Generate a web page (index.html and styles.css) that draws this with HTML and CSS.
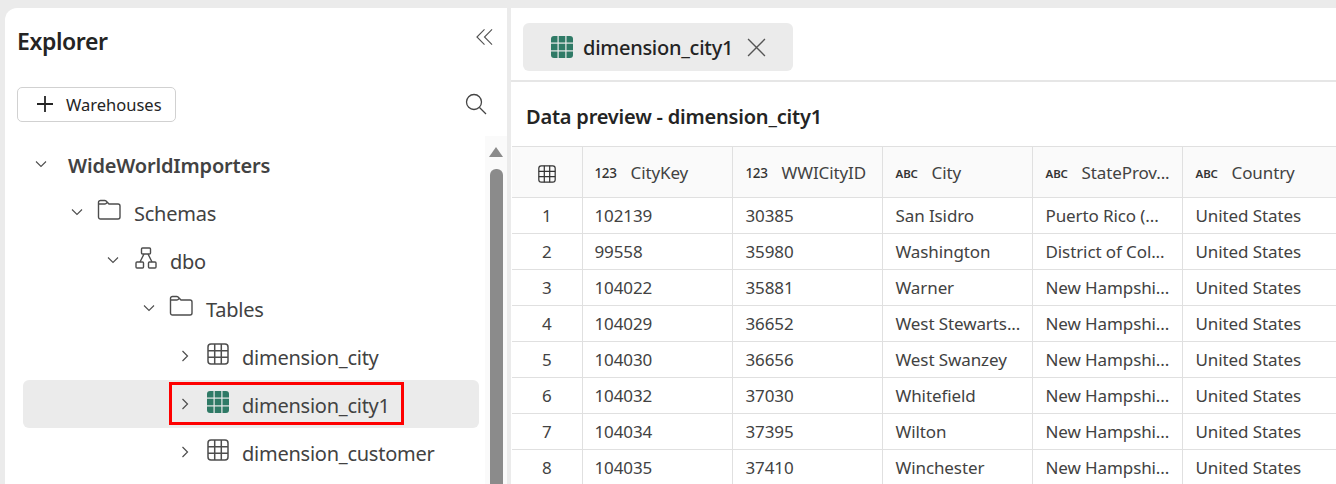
FILE: index.html
```html
<!DOCTYPE html>
<html lang="en">
<head>
    <meta charset="UTF-8">
    <title>Explorer - dimension_city1</title>
    <link rel="stylesheet" href="styles.css">
</head>
<body>
    <svg class="icon-defs" width="0" height="0">
        <symbol id="chevron-down" viewBox="0 0 12 12"><path d="M1 3.500 6 8.500 11 3.500" fill="none" stroke="currentColor" stroke-width="1.100"/></symbol>
        <symbol id="chevron-right" viewBox="0 0 12 12"><path d="M3.500 1 8.500 6 3.500 11" fill="none" stroke="currentColor" stroke-width="1.200"/></symbol>
        <symbol id="folder" viewBox="0 0 24 22"><path d="M1.500 5V3.500a2 2 0 0 1 2-2h4.200c.6 0 1 .2 1.400.6L12 5h9a2 2 0 0 1 2 2v11a2 2 0 0 1-2 2H3.500a2 2 0 0 1-2-2V5h6.200c.6 0 1-.2 1.400-.6l1.200-1.200" fill="none" stroke="currentColor" stroke-width="1.400"/></symbol>
        <symbol id="schema" viewBox="0 0 22 22"><g fill="none" stroke="currentColor" stroke-width="1.400"><rect x="6.500" y="1" width="9" height="6" rx="1"/><rect x="1" y="15" width="7.500" height="6" rx="1"/><rect x="13.500" y="15" width="7.500" height="6" rx="1"/><path d="M9 7 5 15M13 7l4 8"/></g></symbol>
        <symbol id="table" viewBox="0 0 22 22"><g fill="none" stroke="currentColor" stroke-width="1.500"><rect x="1" y="1" width="20" height="20" rx="3"/><path d="M1 7.700h20M1 14.300h20M7.700 1v20M14.300 1v20"/></g></symbol>
        <symbol id="table-filled" viewBox="0 0 22 22"><g fill="#2f7a66"><path d="M0 3a3 3 0 0 1 3-3h3.500v6.500H0z"/><rect x="7.700" width="6.600" height="6.500"/><path d="M15.500 0H19a3 3 0 0 1 3 3v3.500h-6.500z"/><rect y="7.700" width="6.500" height="6.600"/><rect x="7.700" y="7.700" width="6.600" height="6.600"/><rect x="15.500" y="7.700" width="6.500" height="6.600"/><path d="M0 15.500h6.500V22H3a3 3 0 0 1-3-3z"/><rect x="7.700" y="15.500" width="6.600" height="6.500"/><path d="M15.500 15.500H22V19a3 3 0 0 1-3 3h-3.500z"/></g></symbol>
    </svg>

    <div class="app">
        <aside class="sidebar">
            <div class="sidebar-head">
                <h1 class="sidebar-title">Explorer</h1>
                <svg class="collapse-icon" viewBox="0 0 18 18"><path d="M9 1 1 9l8 8M17 1 9 9l8 8" fill="none" stroke="currentColor" stroke-width="1.200"/></svg>
            </div>
            <div class="sidebar-tools">
                <button class="add-btn">
                    <svg class="plus-icon" viewBox="0 0 18 18"><path d="M9 1v16M1 9h16" fill="none" stroke="currentColor" stroke-width="1.800"/></svg>
                    Warehouses
                </button>
                <svg class="search-icon" viewBox="0 0 22 22"><circle cx="9" cy="9" r="7.500" fill="none" stroke="currentColor" stroke-width="1.300"/><path d="m14.500 14.500 6.500 6.500" fill="none" stroke="currentColor" stroke-width="1.300"/></svg>
            </div>
            <div class="tree-wrap">
                <ul class="tree">
                    <li class="tree-row level-0">
                        <svg class="chevron"><use href="#chevron-down"/></svg>
                        <span class="tree-label tree-label-strong">WideWorldImporters</span>
                    </li>
                    <li class="tree-row level-1">
                        <svg class="chevron"><use href="#chevron-down"/></svg>
                        <svg class="tree-icon folder-icon"><use href="#folder"/></svg>
                        <span class="tree-label">Schemas</span>
                    </li>
                    <li class="tree-row level-2">
                        <svg class="chevron"><use href="#chevron-down"/></svg>
                        <svg class="tree-icon"><use href="#schema"/></svg>
                        <span class="tree-label">dbo</span>
                    </li>
                    <li class="tree-row level-3">
                        <svg class="chevron"><use href="#chevron-down"/></svg>
                        <svg class="tree-icon folder-icon"><use href="#folder"/></svg>
                        <span class="tree-label">Tables</span>
                    </li>
                    <li class="tree-row level-4">
                        <svg class="chevron"><use href="#chevron-right"/></svg>
                        <svg class="tree-icon"><use href="#table"/></svg>
                        <span class="tree-label">dimension_city</span>
                    </li>
                    <li class="tree-row level-4 selected">
                        <svg class="chevron"><use href="#chevron-right"/></svg>
                        <svg class="tree-icon"><use href="#table-filled"/></svg>
                        <span class="tree-label">dimension_city1</span>
                        <span class="callout"></span>
                    </li>
                    <li class="tree-row level-4">
                        <svg class="chevron"><use href="#chevron-right"/></svg>
                        <svg class="tree-icon"><use href="#table"/></svg>
                        <span class="tree-label">dimension_customer</span>
                    </li>
                </ul>
                <div class="scrollbar">
                    <span class="scroll-arrow"></span>
                    <span class="scroll-thumb"></span>
                </div>
            </div>
        </aside>

        <main class="content">
            <div class="tab-bar">
                <div class="tab">
                    <svg class="tab-icon"><use href="#table-filled"/></svg>
                    <span class="tab-label">dimension_city1</span>
                    <svg class="tab-close" viewBox="0 0 18 18"><path d="M1 1l16 16M17 1 1 17" fill="none" stroke="currentColor" stroke-width="1.300"/></svg>
                </div>
            </div>
            <h2 class="preview-title">Data preview - dimension_city1</h2>
            <table class="grid">
                <colgroup>
                    <col class="col-index">
                    <col class="col-data"><col class="col-data"><col class="col-data"><col class="col-data">
                    <col class="col-last">
                </colgroup>
                <thead>
                    <tr>
                        <th class="cell-index"><svg class="head-table-icon"><use href="#table"/></svg></th>
                        <th><span class="type">123</span>CityKey</th>
                        <th><span class="type">123</span>WWICityID</th>
                        <th><span class="type type-abc">ABC</span>City</th>
                        <th><span class="type type-abc">ABC</span>StateProv...</th>
                        <th><span class="type type-abc">ABC</span>Country</th>
                    </tr>
                </thead>
                <tbody>
                    <tr><td class="cell-index">1</td><td>102139</td><td>30385</td><td>San Isidro</td><td>Puerto Rico (...</td><td>United States</td></tr>
                    <tr><td class="cell-index">2</td><td>99558</td><td>35980</td><td>Washington</td><td>District of Col...</td><td>United States</td></tr>
                    <tr><td class="cell-index">3</td><td>104022</td><td>35881</td><td>Warner</td><td>New Hampshi...</td><td>United States</td></tr>
                    <tr><td class="cell-index">4</td><td>104029</td><td>36652</td><td>West Stewarts...</td><td>New Hampshi...</td><td>United States</td></tr>
                    <tr><td class="cell-index">5</td><td>104030</td><td>36656</td><td>West Swanzey</td><td>New Hampshi...</td><td>United States</td></tr>
                    <tr><td class="cell-index">6</td><td>104032</td><td>37030</td><td>Whitefield</td><td>New Hampshi...</td><td>United States</td></tr>
                    <tr><td class="cell-index">7</td><td>104034</td><td>37395</td><td>Wilton</td><td>New Hampshi...</td><td>United States</td></tr>
                    <tr><td class="cell-index">8</td><td>104035</td><td>37410</td><td>Winchester</td><td>New Hampshi...</td><td>United States</td></tr>
                </tbody>
            </table>
        </main>
    </div>
</body>
</html>
```

FILE: styles.css
```css
* {
    box-sizing: border-box;
}
html, body {
    margin: 0;
    height: 100%;
    overflow: hidden;
}
body {
    background: #ebebeb;
    color: #242424;
    font-family: "Noto Sans", "Open Sans", sans-serif;
}
.icon-defs {
    position: absolute;
}
.app {
    display: flex;
    gap: 4px;
    height: 484px;
    padding: 8px 0 0 5px;
}

/* left panel */
.sidebar {
    width: 502px;
    flex: none;
    background: white;
    border-radius: 12px 0 0 0;
    display: flex;
    flex-direction: column;
    overflow: hidden;
}
.sidebar-head {
    height: 62px;
    display: flex;
    justify-content: space-between;
    padding: 18px 14px 0 12px;
}
.sidebar-title {
    margin: 0;
    font-size: 23px;
    line-height: 30px;
    font-weight: 600;
    letter-spacing: -0.4px;
}
.collapse-icon {
    width: 17px;
    height: 18px;
    margin-top: 2px;
    color: #555;
}
.sidebar-tools {
    height: 34px;
    margin-top: 17px;
    padding: 0 20px 0 12px;
    display: flex;
    justify-content: space-between;
    align-items: center;
}
.add-btn {
    height: 35px;
    width: 159px;
    display: flex;
    align-items: center;
    gap: 12px;
    padding: 0 0 0 18px;
    background: white;
    border: 1px solid #d1d1d1;
    border-radius: 5px;
    color: #242424;
    font-family: inherit;
    font-size: 16.5px;
    letter-spacing: 0;
}
.plus-icon {
    width: 18px;
    height: 18px;
    flex: none;
}
.search-icon {
    width: 22px;
    height: 22px;
    color: #444;
}
.tree-wrap {
    flex: 1;
    display: flex;
    min-height: 0;
    margin-top: 15px;
}

/* tree */
.tree {
    list-style: none;
    margin: 0;
    padding: 4px 0 0 18px;
    flex: 1;
    min-width: 0;
}
.tree-row {
    position: relative;
    height: 48px;
    margin-right: 6px;
    display: flex;
    align-items: center;
    color: #424242;
    border-radius: 6px;
}
.level-0 { padding-left: 12px; }
.level-1 { padding-left: 48px; }
.level-2 { padding-left: 84px; }
.level-3 { padding-left: 120px; }
.level-4 { padding-left: 156px; }
.tree-row.selected {
    background: #ebebeb;
}
.chevron {
    width: 12px;
    height: 12px;
    flex: none;
    color: #4d4d4d;
}
.tree-icon {
    width: 22px;
    height: 22px;
    flex: none;
    margin: -4px 0 0 16px;
    color: #4d4d4d;
}
.folder-icon {
    width: 24px;
    margin-left: 14px;
}
.tree-label {
    font-size: 20px;
    letter-spacing: -0.25px;
    margin: 2px 0 0 13px;
    white-space: nowrap;
}
.level-0 .tree-label {
    margin-left: 21px;
}
.tree-label-strong {
    font-weight: 600;
    letter-spacing: -0.17px;
}
.callout {
    position: absolute;
    left: 146px;
    top: 2px;
    width: 235px;
    height: 43px;
    border: 3px solid #fe0000;
}

/* scrollbar */
.scrollbar {
    width: 22px;
    flex: none;
    background: #fafafa;
    display: flex;
    flex-direction: column;
    align-items: center;
    padding-top: 11px;
}
.scroll-arrow {
    width: 0;
    height: 0;
    border-left: 7px solid transparent;
    border-right: 7px solid transparent;
    border-bottom: 10px solid #8b8b8b;
}
.scroll-thumb {
    margin-top: 12px;
    width: 13px;
    flex: 1;
    background: #8b8b8b;
    border-radius: 6px 6px 0 0;
}

/* right panel */
.content {
    flex: 1;
    min-width: 0;
    background: white;
    overflow: hidden;
}
.tab-bar {
    height: 74px;
    padding: 15px 0 0 12px;
    border-bottom: 2px solid #e6e6e6;
}
.tab {
    width: 270px;
    height: 48px;
    background: #ebebeb;
    border-radius: 6px;
    display: flex;
    align-items: center;
    padding-left: 28px;
}
.tab-icon {
    width: 22px;
    height: 22px;
    flex: none;
}
.tab-label {
    margin-left: 10px;
    font-size: 20px;
    letter-spacing: -0.27px;
    font-weight: 500;
}
.tab-close {
    width: 19px;
    height: 19px;
    margin-left: 14px;
    color: #555;
}
.preview-title {
    margin: 0;
    height: 64px;
    padding: 20px 0 0 15px;
    font-size: 20px;
    line-height: 30px;
    font-weight: 600;
    letter-spacing: -0.2px;
}

/* data grid */
.grid {
    table-layout: fixed;
    border-collapse: collapse;
    width: 830px;
    margin-left: 1px;
    font-size: 17px;
    letter-spacing: -0.1px;
    color: #424242;
}
.col-index { width: 70px; }
.col-data { width: 150px; }
.col-last { width: 160px; }
.grid th, .grid td {
    border: 1px solid #e0e0e0;
    padding: 0 0 0 13px;
    height: 36px;
    text-align: left;
    font-weight: 400;
    white-space: nowrap;
    overflow: hidden;
}
.grid th:nth-child(2), .grid td:nth-child(2) {
    padding-left: 12px;
}
.grid th {
    height: 51px;
    background: #fafafa;
}
.grid th:first-child, .grid td:first-child {
    border-left: 0;
}
.grid .cell-index {
    text-align: center;
    padding: 0;
}
.head-table-icon {
    width: 18px;
    height: 18px;
    display: inline-block;
    vertical-align: middle;
    color: #333;
}
.type {
    display: inline-block;
    width: 36px;
    font-size: 13.5px;
    font-weight: 500;
    letter-spacing: -0.4px;
    color: #333;
    vertical-align: 1px;
}
.type-abc {
    font-size: 11.5px;
    font-weight: 600;
    letter-spacing: -0.1px;
}
```
